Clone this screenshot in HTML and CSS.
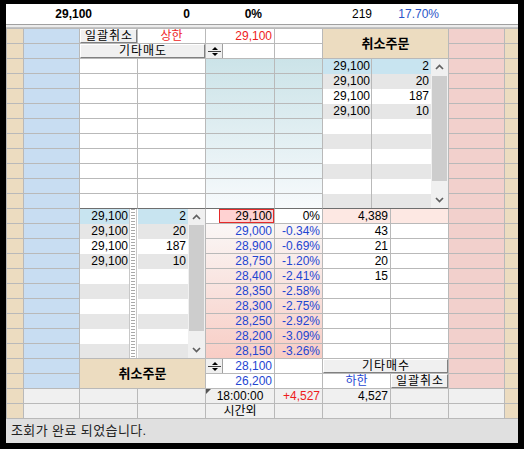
FILE: index.html
```html
<!DOCTYPE html>
<html lang="ko">
<head>
<meta charset="utf-8">
<title>호가주문</title>
<link rel="stylesheet" href="styles.css">
</head>
<body>
<div class="win">
  <div class="hdr">
    <div class="ha bd">29,100</div>
    <div class="hb bd">0</div>
    <div class="hc bd">0%</div>
    <div class="hd">219</div>
    <div class="he hk">17.70%</div>
  </div>
  <div class="hsep"></div>
  <div class="grid">
    <!-- row 0 -->
    <div class="t"></div><div class="b"></div><div class="s2 bc"><span class="btn">일괄취소</span></div><div class="s2 c rd">상한</div><div class="rd">29,100</div><div></div><div class="s4 r2 cx">취소주문</div><div class="p"></div><div class="te"></div>
    <!-- row 1 -->
    <div class="t"></div><div class="b"></div><div class="s4 bc"><span class="btn">기타매도</span></div><div class="spn"><svg width="17" height="14" viewBox="0 0 17 14"><rect width="17" height="14" fill="#f0f0f0"/><path d="M16.5 0V14" stroke="#a0a0a0"/><path d="M9 3L12 6H6Z" fill="#000"/><path d="M2 7.5H15" stroke="#404040"/><path d="M6 9H12L9 12Z" fill="#000"/></svg></div><div></div><div class="p"></div><div class="te"></div>
    <!-- row 2 -->
    <div class="t"></div><div class="b"></div><div class="s2"></div><div class="s2"></div><div class="tl"></div><div class="tl"></div>
    <div class="s4 r10 sep ol">
      <div class="rows">
        <div class="lr sel"><span>29,100</span><span>2</span></div>
        <div class="lr"><span>29,100</span><span>20</span></div>
        <div class="lr"><span>29,100</span><span>187</span></div>
        <div class="lr"><span>29,100</span><span>10</span></div>
        <div class="lr"><span></span><span></span></div>
        <div class="lr"><span></span><span></span></div>
        <div class="lr"><span></span><span></span></div>
        <div class="lr"><span></span><span></span></div>
        <div class="lr"><span></span><span></span></div>
        <div class="lr"><span></span><span></span></div>
      </div>
      <div class="sb">
        <div class="ar"><svg width="9" height="6" viewBox="0 0 9 6"><polyline points="1,5 4.5,1.5 8,5" fill="none" stroke="#606060" stroke-width="1.7"/></svg></div>
        <div class="tk"><div class="th th1"></div></div>
        <div class="ar"><svg width="9" height="6" viewBox="0 0 9 6"><polyline points="1,1 4.5,4.5 8,1" fill="none" stroke="#606060" stroke-width="1.7"/></svg></div>
      </div>
    </div>
    <div class="p"></div><div class="te"></div>
    <!-- rows 3-10 -->
    <div class="t"></div><div class="b"></div><div class="s2"></div><div class="s2"></div><div class="tl"></div><div class="tl"></div><div class="p"></div><div class="te"></div>
    <div class="t"></div><div class="b"></div><div class="s2"></div><div class="s2"></div><div class="tl"></div><div class="tl"></div><div class="p"></div><div class="te"></div>
    <div class="t"></div><div class="b"></div><div class="s2"></div><div class="s2"></div><div class="tl"></div><div class="tl"></div><div class="p"></div><div class="te"></div>
    <div class="t"></div><div class="b"></div><div class="s2"></div><div class="s2"></div><div class="tl"></div><div class="tl"></div><div class="p"></div><div class="te"></div>
    <div class="t"></div><div class="b"></div><div class="s2"></div><div class="s2"></div><div class="tl"></div><div class="tl"></div><div class="p"></div><div class="te"></div>
    <div class="t"></div><div class="b"></div><div class="s2"></div><div class="s2"></div><div class="tl"></div><div class="tl"></div><div class="p"></div><div class="te"></div>
    <div class="t"></div><div class="b"></div><div class="s2"></div><div class="s2"></div><div class="tl"></div><div class="tl"></div><div class="p"></div><div class="te"></div>
    <div class="t"></div><div class="b"></div><div class="s2"></div><div class="s2"></div><div class="tl"></div><div class="tl"></div><div class="p"></div><div class="te"></div>
    <!-- row 11 -->
    <div class="t"></div><div class="b"></div><div class="s2 sep"></div><div class="s2 sep"></div><div class="tl sep"></div><div class="tl sep"></div><div class="p"></div><div class="te"></div>
    <!-- row 12 -->
    <div class="t"></div><div class="b"></div><div class="li lp ls">29,100</div>
    <div class="r10 lad"><div></div></div>
    <div class="li lq ls">2</div>
    <div class="r10 sb">
      <div class="ar"><svg width="9" height="6" viewBox="0 0 9 6"><polyline points="1,5 4.5,1.5 8,5" fill="none" stroke="#606060" stroke-width="1.7"/></svg></div>
      <div class="tk"><div class="th"></div></div>
      <div class="ar"><svg width="9" height="6" viewBox="0 0 9 6"><polyline points="1,1 4.5,4.5 8,1" fill="none" stroke="#606060" stroke-width="1.7"/></svg></div>
    </div>
    <div class="cur"><span>29,100</span></div><div>0%</div><div class="s2 o">4,389</div><div class="s2 o"></div><div class="p"></div><div class="te"></div>
    <!-- rows 13-21 -->
    <div class="t"></div><div class="b"></div><div class="li lp lg">29,100</div><div class="li lq lg">20</div><div class="pg k">29,000</div><div class="pg k">-0.34%</div><div class="s2">43</div><div class="s2"></div><div class="p"></div><div class="te"></div>
    <div class="t"></div><div class="b"></div><div class="li lp">29,100</div><div class="li lq">187</div><div class="pg k">28,900</div><div class="pg k">-0.69%</div><div class="s2">21</div><div class="s2"></div><div class="p"></div><div class="te"></div>
    <div class="t"></div><div class="b"></div><div class="li lp lg">29,100</div><div class="li lq lg">10</div><div class="pg k">28,750</div><div class="pg k">-1.20%</div><div class="s2">20</div><div class="s2"></div><div class="p"></div><div class="te"></div>
    <div class="t"></div><div class="b"></div><div class="li lp"></div><div class="li lq"></div><div class="pg k">28,400</div><div class="pg k">-2.41%</div><div class="s2">15</div><div class="s2"></div><div class="p"></div><div class="te"></div>
    <div class="t"></div><div class="b"></div><div class="li lp lg"></div><div class="li lq lg"></div><div class="pg k">28,350</div><div class="pg k">-2.58%</div><div class="s2"></div><div class="s2"></div><div class="p"></div><div class="te"></div>
    <div class="t"></div><div class="b"></div><div class="li lp"></div><div class="li lq"></div><div class="pg k">28,300</div><div class="pg k">-2.75%</div><div class="s2"></div><div class="s2"></div><div class="p"></div><div class="te"></div>
    <div class="t"></div><div class="b"></div><div class="li lp lg"></div><div class="li lq lg"></div><div class="pg k">28,250</div><div class="pg k">-2.92%</div><div class="s2"></div><div class="s2"></div><div class="p"></div><div class="te"></div>
    <div class="t"></div><div class="b"></div><div class="li lp"></div><div class="li lq"></div><div class="pg k">28,200</div><div class="pg k">-3.09%</div><div class="s2"></div><div class="s2"></div><div class="p"></div><div class="te"></div>
    <div class="t"></div><div class="b"></div><div class="li lp lg lb"></div><div class="li lq lg lb"></div><div class="pg k">28,150</div><div class="pg k">-3.26%</div><div class="s2"></div><div class="s2"></div><div class="p"></div><div class="te"></div>
    <!-- row 22 -->
    <div class="t"></div><div class="b"></div><div class="s4 r2 cx">취소주문</div><div class="spn k"><svg width="17" height="14" viewBox="0 0 17 14"><rect width="17" height="14" fill="#f0f0f0"/><path d="M16.5 0V14" stroke="#a0a0a0"/><path d="M9 3L12 6H6Z" fill="#000"/><path d="M2 7.5H15" stroke="#404040"/><path d="M6 9H12L9 12Z" fill="#000"/></svg>28,100</div><div></div><div class="s4 bc"><span class="btn">기타매수</span></div><div class="p"></div><div class="te"></div>
    <!-- row 23 -->
    <div class="t"></div><div class="b"></div><div class="k">26,200</div><div></div><div class="s2 c k">하한</div><div class="s2 bc"><span class="btn">일괄취소</span></div><div class="p"></div><div class="te"></div>
    <!-- row 24 -->
    <div class="t"></div><div class="g"></div><div class="s2 g"></div><div class="s2 g"></div><div class="g c mk">18:00:00</div><div class="g rd">+4,527</div><div class="s2 g">4,527</div><div class="s2 g"></div><div class="g"></div><div class="te"></div>
    <!-- row 25 -->
    <div class="t"></div><div class="g"></div><div class="s2 g"></div><div class="s2 g"></div><div class="g c">시간외</div><div class="g"></div><div class="s2 g"></div><div class="s2 g"></div><div class="g"></div><div class="te"></div>
  </div>
  <div class="status"><span class="grip"></span><span>조회가 완료 되었습니다.</span></div>
</div>
</body>
</html>
```
FILE: styles.css
```css
* { box-sizing: border-box; margin: 0; padding: 0; }
html, body { background: #000; }
body {
  width: 524px;
  height: 449px;
  padding: 4px 6px 6px;
  overflow: hidden;
  font: 12px/14px "Liberation Sans", "Noto Sans CJK KR", sans-serif;
  color: #000;
}
.win {
  width: 512px;
  height: 439px;
  display: flex;
  flex-direction: column;
  background: #e0e0e0;
}

/* header */
.hdr { height: 20px; flex: none; display: flex; background: #fff; line-height: 20px; }
.hdr > div { text-align: right; padding-right: 5px; }
.ha { width: 91px; }
.hb { width: 98px; }
.hc { width: 72px; }
.hd { width: 110px; }
.he { width: 67px; }
.bd { font-weight: bold; }
.hk { color: #2a55c8; }
.hsep {
  height: 4px;
  flex: none;
  border-top: 1px solid #a0a0a0;
  border-bottom: 1px solid #c4c4c4;
  background: #ececec;
}

/* grid */
.grid {
  flex: none;
  display: grid;
  grid-template-columns: 17px 56px 49px 9px 50px 18px 69px 48px 49px 19px 41px 17px 56px 13px;
  grid-template-rows: repeat(26, 15px);
  border-top: 1px solid #b9b9b9;
  border-left: 1px solid #b9b9b9;
  background: #fff;
}
:where(.grid > div) {
  border-right: 1px solid #b9b9b9;
  border-bottom: 1px solid #b9b9b9;
  padding: 0 2px;
  text-align: right;
  white-space: nowrap;
  overflow: hidden;
}
.s2 { grid-column: span 2; }
.s4 { grid-column: span 4; }
.r2 { grid-row: span 2; }
.r10 { grid-row: span 10; }

.t, .te { background: #ecdcc0; }
.te { border-right: 0; }
.b { background: #c8ddf2; }
.p { background: #f2d0cc; }
.g { background: #f0f0f0; }
.o { background: #fde8e3; }
.c { text-align: center; }
.rd { color: #ee1c1c; }
.k { color: #1e46d2; }
.sep { border-bottom-color: #6e6e6e; }
.cx {
  background: #ecdcc0;
  text-align: center;
  font-weight: bold;
  font-size: 13px;
  line-height: 29px;
}
.tl { background: linear-gradient(#cbe3e8, #f7fafc) 0 58px / 100% 150px no-repeat fixed; }
.pg { background: linear-gradient(#faf7f6, #f8cdc5) 0 223px / 100% 135px no-repeat fixed; }

/* buttons & spinners */
.bc { padding: 0; }
.btn {
  display: block;
  height: 14px;
  background: #f0f0f0;
  border: 1px solid;
  border-color: #fff #808080 #808080 #fff;
  text-align: center;
  line-height: 12px;
  letter-spacing: 1px;
  text-indent: 1px;
  color: #000;
}
.spn { display: flex; justify-content: space-between; padding: 0 2px 0 0; }
.spn svg { display: block; flex: none; }

/* current price */
.cur { padding: 0; display: flex; justify-content: flex-end; }
.cur span {
  width: 55px;
  border: 1px solid #e42a2a;
  background: #ffd2d2;
  padding-right: 1px;
  line-height: 12px;
  text-align: right;
}
.mk { position: relative; }
.mk::before {
  content: "";
  position: absolute;
  left: 0;
  top: 0;
  border-top: 5px solid #555;
  border-right: 5px solid transparent;
}

/* lower order list */
.li { border-right: 0; border-bottom: 0; }
.lp { padding-right: 1px; }
.lq { padding-right: 2px; }
.ls { background: #c8e4f0; }
.lg { background: #e6e6e6; }
.lb { border-bottom: 1px solid #b9b9b9; }
.lad { padding: 0 1px 0 0; border-right: 0; }
.lad div {
  height: 100%;
  border: solid #c8c8c8;
  border-width: 0 1px;
  padding: 0 1px;
  background: repeating-linear-gradient(#a9a9a9 0 1px, #fff 1px 3px) content-box, #fff;
}

/* scrollbars */
.sb { padding: 0; background: #f0f0f0; display: flex; flex-direction: column; }
.ar { height: 16px; flex: none; display: flex; align-items: center; justify-content: center; }
.ar svg { display: block; }
.tk { flex: 1; }
.th { margin: 0 1px; height: 106px; background: #cdcdcd; }
.th1 { margin-top: 1px; height: 105px; }

/* upper order list */
.ol { padding: 0; display: flex; }
.rows { width: 108px; flex: none; }
.ol .sb { width: 17px; flex: none; }
.lr { display: flex; height: 15px; line-height: 15px; }
.lr:nth-child(even) { background: #e6e6e6; }
.lr.sel { background: #c8e4f0; }
.lr span { text-align: right; }
.lr span:first-child { width: 49px; border-right: 1px solid #b9b9b9; padding-right: 1px; }
.lr span:last-child { width: 59px; padding-right: 2px; }

/* status bar */
.status { flex: 1; display: flex; align-items: center; gap: 2px; color: #222; font-size: 13px; letter-spacing: 0.4px; }
.grip {
  width: 3px;
  height: 20px;
  background: radial-gradient(#8a8a8a 45%, transparent 50%) 0 0 / 2px 2px;
}
```
